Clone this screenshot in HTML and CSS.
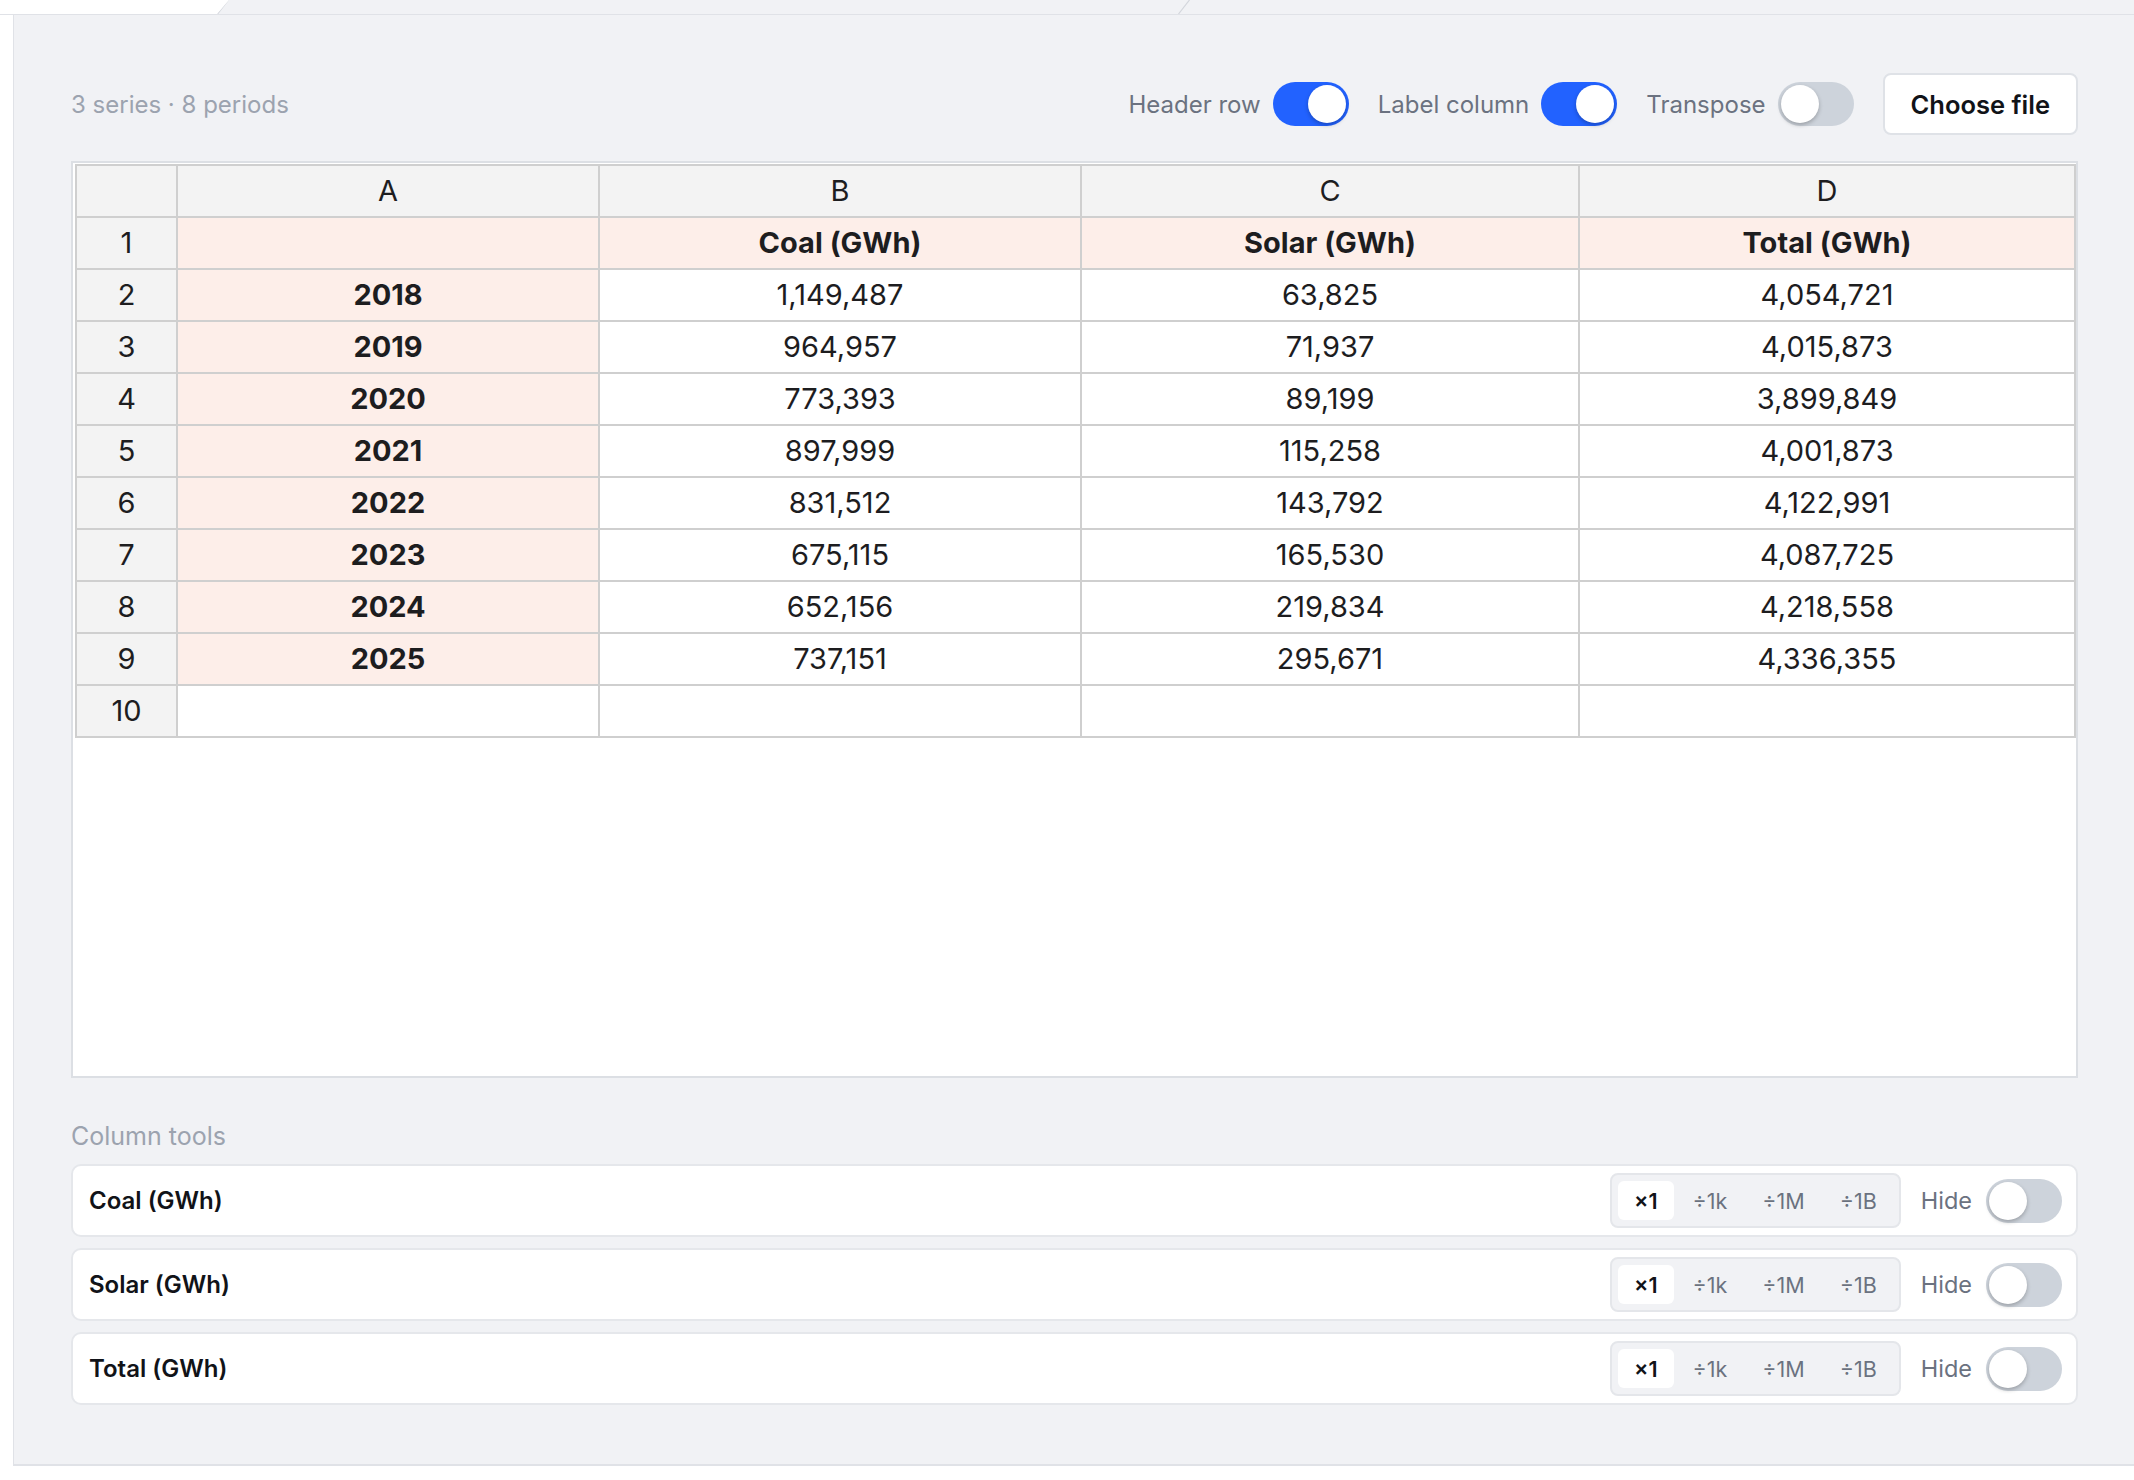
FILE: index.html
```html
<!DOCTYPE html>
<html lang="en">
<head>
    <meta charset="UTF-8">
    <meta name="viewport" content="width=device-width, initial-scale=1.0">
    <title>Data sheet</title>
    <link rel="stylesheet" href="styles.css">
</head>
<body>
    <div class="tabs">
        <div class="tab tab-active"></div>
        <svg class="tab-edge" width="12" height="14" viewBox="0 0 12 14"><line x1="0.5" y1="14" x2="11.5" y2="0" stroke="#d3d6dc" stroke-width="1.2"/></svg>
        <div class="tab-spacer"></div>
        <svg class="tab-edge" width="12" height="14" viewBox="0 0 12 14"><line x1="0.5" y1="14" x2="11.5" y2="0" stroke="#d3d6dc" stroke-width="1.2"/></svg>
    </div>

    <div class="shell">
        <div class="rail"></div>
        <main class="panel">
            <div class="toolbar">
                <div class="summary">3 series · 8 periods</div>
                <div class="controls">
                    <label class="switch-row">
                        <span>Header row</span>
                        <span class="switch on"><span class="knob"></span></span>
                    </label>
                    <label class="switch-row">
                        <span>Label column</span>
                        <span class="switch on"><span class="knob"></span></span>
                    </label>
                    <label class="switch-row">
                        <span>Transpose</span>
                        <span class="switch"><span class="knob"></span></span>
                    </label>
                    <button class="file-btn">Choose file</button>
                </div>
            </div>

            <div class="sheet">
                <div class="grid">
                    <div class="cell head"></div>
                    <div class="cell head">A</div>
                    <div class="cell head">B</div>
                    <div class="cell head">C</div>
                    <div class="cell head">D</div>

                    <div class="cell head">1</div>
                    <div class="cell label"></div>
                    <div class="cell label">Coal (GWh)</div>
                    <div class="cell label">Solar (GWh)</div>
                    <div class="cell label">Total (GWh)</div>

                    <div class="cell head">2</div>
                    <div class="cell label">2018</div>
                    <div class="cell">1,149,487</div>
                    <div class="cell">63,825</div>
                    <div class="cell">4,054,721</div>

                    <div class="cell head">3</div>
                    <div class="cell label">2019</div>
                    <div class="cell">964,957</div>
                    <div class="cell">71,937</div>
                    <div class="cell">4,015,873</div>

                    <div class="cell head">4</div>
                    <div class="cell label">2020</div>
                    <div class="cell">773,393</div>
                    <div class="cell">89,199</div>
                    <div class="cell">3,899,849</div>

                    <div class="cell head">5</div>
                    <div class="cell label">2021</div>
                    <div class="cell">897,999</div>
                    <div class="cell">115,258</div>
                    <div class="cell">4,001,873</div>

                    <div class="cell head">6</div>
                    <div class="cell label">2022</div>
                    <div class="cell">831,512</div>
                    <div class="cell">143,792</div>
                    <div class="cell">4,122,991</div>

                    <div class="cell head">7</div>
                    <div class="cell label">2023</div>
                    <div class="cell">675,115</div>
                    <div class="cell">165,530</div>
                    <div class="cell">4,087,725</div>

                    <div class="cell head">8</div>
                    <div class="cell label">2024</div>
                    <div class="cell">652,156</div>
                    <div class="cell">219,834</div>
                    <div class="cell">4,218,558</div>

                    <div class="cell head">9</div>
                    <div class="cell label">2025</div>
                    <div class="cell">737,151</div>
                    <div class="cell">295,671</div>
                    <div class="cell">4,336,355</div>

                    <div class="cell head">10</div>
                    <div class="cell"></div>
                    <div class="cell"></div>
                    <div class="cell"></div>
                    <div class="cell"></div>
                </div>
            </div>

            <div class="tools-title">Column tools</div>
            <div class="tools">
                <div class="tool-card">
                    <div class="tool-name">Coal (GWh)</div>
                    <div class="segments">
                        <span class="seg active">×1</span>
                        <span class="seg">÷1k</span>
                        <span class="seg">÷1M</span>
                        <span class="seg">÷1B</span>
                    </div>
                    <span class="hide-label">Hide</span>
                    <span class="switch"><span class="knob"></span></span>
                </div>
                <div class="tool-card">
                    <div class="tool-name">Solar (GWh)</div>
                    <div class="segments">
                        <span class="seg active">×1</span>
                        <span class="seg">÷1k</span>
                        <span class="seg">÷1M</span>
                        <span class="seg">÷1B</span>
                    </div>
                    <span class="hide-label">Hide</span>
                    <span class="switch"><span class="knob"></span></span>
                </div>
                <div class="tool-card">
                    <div class="tool-name">Total (GWh)</div>
                    <div class="segments">
                        <span class="seg active">×1</span>
                        <span class="seg">÷1k</span>
                        <span class="seg">÷1M</span>
                        <span class="seg">÷1B</span>
                    </div>
                    <span class="hide-label">Hide</span>
                    <span class="switch"><span class="knob"></span></span>
                </div>
            </div>
        </main>
    </div>
</body>
</html>
```

FILE: styles.css
```css
:root {
    --panel: #f1f2f5;
    --line: #e0e2e7;
    --grid-line: #cfcfcf;
    --head: #f3f3f3;
    --label: #fdeee9;
    --blue: #2262ff;
    --off: #cdd3db;
    --muted: #9ca3af;
    --soft: #6b7280;
    --ink: #1c1d21;
}

* {
    margin: 0;
    padding: 0;
    box-sizing: border-box;
}

body {
    background: #ffffff;
    font-family: Inter, 'Noto Sans', sans-serif;
    color: var(--ink);
}

/* top tab strip */
.tabs {
    display: flex;
    height: 15px;
    background: var(--panel);
    border-bottom: 1px solid var(--line);
}

.tab-active {
    width: 229px;
    background: #ffffff;
    clip-path: polygon(0 0, 100% 0, 217px 100%, 0 100%);
}

.tab-edge {
    display: block;
    margin-left: -12px;
}

.tab-spacer {
    width: 961px;
}

.shell {
    display: flex;
}

.rail {
    width: 14px;
    background: #ffffff;
    border-right: 1px solid var(--line);
}

.panel {
    flex: 1;
    background: var(--panel);
    padding: 58px 56px 56px 57px;
    border-bottom: 2px solid var(--line);
    height: 1451px;
}

/* toolbar */
.toolbar {
    display: flex;
    align-items: center;
    justify-content: space-between;
    height: 62px;
}

.summary {
    font-size: 24px;
    color: var(--muted);
}

.controls {
    display: flex;
    align-items: center;
    gap: 29px;
}

.switch-row {
    display: flex;
    align-items: center;
    gap: 12px;
    font-size: 24px;
    color: var(--soft);
}

.switch {
    position: relative;
    display: inline-block;
    width: 76px;
    height: 44px;
    border-radius: 22px;
    background: var(--off);
}

.switch.on {
    background: var(--blue);
}

.knob {
    position: absolute;
    top: 3px;
    left: 3px;
    width: 38px;
    height: 38px;
    border-radius: 50%;
    background: #ffffff;
    box-shadow: 0 2px 4px rgba(0, 0, 0, 0.25);
}

.switch.on .knob {
    left: 35px;
}

.file-btn {
    height: 62px;
    padding: 0 26px;
    font-family: inherit;
    font-size: 25.5px;
    font-weight: 600;
    color: #111318;
    background: #ffffff;
    border: 2px solid #dfe2e7;
    border-radius: 8px;
}

/* spreadsheet */
.sheet {
    margin-top: 26px;
    height: 917px;
    background: #ffffff;
    border: 2px solid #dcdfe4;
    padding: 1px 0 0 2px;
}

.grid {
    display: grid;
    grid-template-columns: 99px 420px 480px 496px 1fr;
    grid-auto-rows: 50px;
    gap: 2px;
    background: var(--grid-line);
    border: 2px solid var(--grid-line);
    font-family: Inter, 'Liberation Sans', sans-serif;
    font-size: 29px;
    color: #1d1d1f;
}

.cell {
    display: flex;
    align-items: center;
    justify-content: center;
    background: #ffffff;
    padding-bottom: 1px;
}

.cell.head {
    background: var(--head);
}

.cell.label {
    background: var(--label);
    font-weight: 700;
}

/* column tools */
.tools-title {
    margin-top: 43px;
    font-size: 25px;
    color: var(--muted);
}

.tools {
    display: flex;
    flex-direction: column;
    gap: 11px;
    margin-top: 13px;
}

.tool-card {
    display: flex;
    align-items: center;
    height: 73px;
    padding: 0 14px 0 16px;
    background: #ffffff;
    border: 2px solid #e5e7eb;
    border-radius: 10px;
}

.tool-name {
    flex: 1;
    font-size: 24px;
    font-weight: 600;
    color: #111318;
}

.segments {
    display: flex;
    gap: 3px;
    height: 55px;
    padding: 6px 6px;
    background: var(--panel);
    border: 2px solid #e4e6ea;
    border-radius: 8px;
    margin-right: 20px;
}

.seg {
    display: flex;
    align-items: center;
    padding: 0 16px;
    font-size: 21.5px;
    color: var(--soft);
    border-radius: 6px;
}

.seg.active {
    background: #ffffff;
    color: #111318;
    font-weight: 600;
}

.hide-label {
    font-size: 23.5px;
    color: var(--soft);
    margin-right: 14px;
}
```
